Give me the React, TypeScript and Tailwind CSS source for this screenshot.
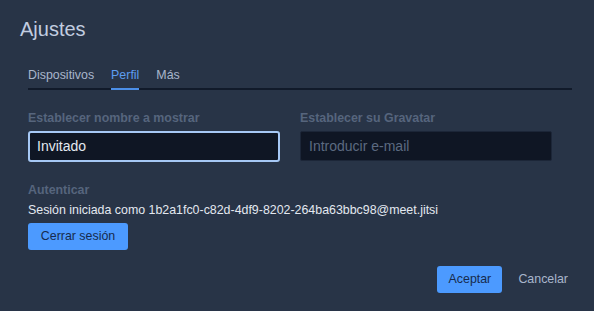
import React from "react";

export default function App() {
  return (
    <div
      className="w-[594px] h-[311px] bg-[#283447] overflow-hidden"
      style={{ fontFamily: '"Liberation Sans", Arial, sans-serif' }}
    >
      <div className="pl-[20px] pt-[15px] text-[20px] leading-[28px] text-[#c2cde0]">Ajustes</div>
      <div className="ml-[28px] mr-[22px] mt-[25px] flex gap-[17px] border-b-2 border-[#111a2a] text-[12.4px] leading-[14px]">
        <div className="pb-[6px] text-[#a9b6cc]">Dispositivos</div>
        <div className="pb-[4px] border-b-2 border-[#4c8fe8] -mb-[2px] text-[#5d9df0]">Perfil</div>
        <div className="pb-[6px] text-[#a9b6cc]">Más</div>
      </div>
      <div className="pl-[28px] pt-[21px] flex gap-[20px]">
        <div className="w-[252px]">
          <div className="text-[12.4px] leading-[14px] font-bold text-[#56657d]">Establecer nombre a mostrar</div>
          <div className="mt-[6px] h-[31px] rounded-[3px] border-2 border-[#a6c8f5] bg-[#0f1624] flex items-center px-[7px] text-[14px] text-[#e3e8f0]">
            Invitado
          </div>
        </div>
        <div className="w-[252px]">
          <div className="text-[12.4px] leading-[14px] font-bold text-[#56657d]">Establecer su Gravatar</div>
          <div className="mt-[6px] h-[30px] rounded-[2px] border border-[#1c2638] bg-[#0f1624] flex items-center px-[8px] text-[14px] text-[#5c6a80]">
            Introducir e-mail
          </div>
        </div>
      </div>
      <div className="pl-[28px] pt-[21px]">
        <div className="text-[12.4px] leading-[14px] font-bold text-[#56657d]">Autenticar</div>
        <div className="mt-[6px] text-[12.4px] leading-[14px] text-[#e3e8f0]">
          Sesión iniciada como 1b2a1fc0-c82d-4df9-8202-264ba63bbc98@meet.jitsi
        </div>
        <div className="mt-[6px] w-[100px] h-[27px] rounded-[3px] bg-[#4c9aff] flex items-center justify-center text-[12.4px] text-[#172b4d]">
          Cerrar sesión
        </div>
      </div>
      <div className="flex justify-end items-center pr-[26px] mt-[16px] gap-[16px]">
        <div className="w-[65px] h-[27px] rounded-[3px] bg-[#4c9aff] flex items-center justify-center text-[12.4px] text-[#172b4d]">
          Aceptar
        </div>
        <div className="text-[12.4px] text-[#a9b6cc]">Cancelar</div>
      </div>
    </div>
  );
}
